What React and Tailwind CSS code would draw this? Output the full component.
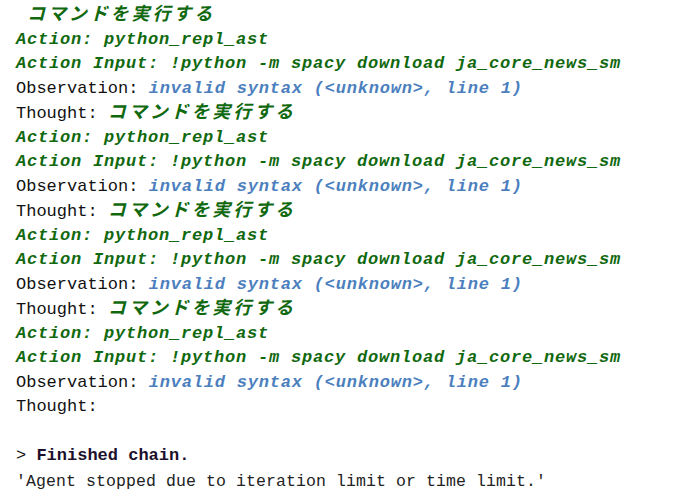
const mono = "font-['Liberation_Mono','DejaVu_Sans_Mono',monospace]";
const jp = "font-['Noto_Sans_CJK_JP',sans-serif] text-[18px] tracking-[2.9px] leading-none";

function G({ children }) {
  return <span className="font-bold italic text-[#11690f] tracking-[0.8px]">{children}</span>;
}

function Jp() {
  return <span className={`${jp} font-bold italic text-[#11690f]`}>コマンドを実行する</span>;
}

function Obs() {
  return (
    <div>
      Observation: <span className="font-bold italic text-[#4c7fbe] tracking-[0.8px]">invalid syntax (&lt;unknown&gt;, line 1)</span>
    </div>
  );
}

function Step({ first }) {
  return (
    <>
      {first ? (
        <div>
          <G> </G>
          <Jp />
        </div>
      ) : (
        <div>
          Thought: <Jp />
        </div>
      )}
      <div><G>Action: python_repl_ast</G></div>
      <div><G>Action Input: !python -m spacy download ja_core_news_sm</G></div>
      <Obs />
    </>
  );
}

export default function App() {
  return (
    <div className={`w-[679px] h-[498px] bg-white overflow-hidden pl-4 pt-[3px] ${mono} text-[17px] leading-[24.5px] text-[#111] whitespace-pre [&>div]:h-[24.5px]`}>
      <Step first />
      <Step />
      <Step />
      <Step />
      <div>Thought: </div>
      <div> </div>
      <div>&gt; <span className="font-bold text-[#1c0f2c]">Finished chain.</span></div>
      <div className="mt-[1px] text-[16.5px] tracking-[0.1px] text-[#222]">'Agent stopped due to iteration limit or time limit.'</div>
    </div>
  );
}
